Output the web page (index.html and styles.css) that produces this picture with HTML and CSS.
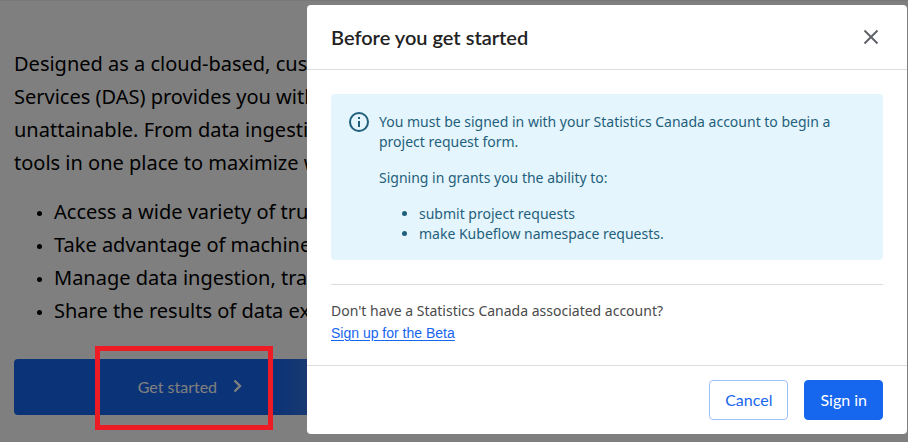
FILE: index.html
```html
<!DOCTYPE html>
<html lang="en">
<head>
<meta charset="utf-8">
<title>Before you get started</title>
<link rel="stylesheet" href="styles.css">
</head>
<body>
<main class="page">
  <p class="intro">Designed as a cloud-based, cus<br>Services (DAS) provides you with<br>unattainable. From data ingesti<br>tools in one place to maximize w</p>
  <ul class="features">
    <li>Access a wide variety of tru</li>
    <li>Take advantage of machine</li>
    <li>Manage data ingestion, tra</li>
    <li>Share the results of data ex</li>
  </ul>
  <div class="start">
    <button class="start-button" type="button">
      Get started
      <svg width="20" height="20" viewBox="0 0 20 20" fill="none" stroke="currentColor" stroke-width="2.4" aria-hidden="true"><path d="M7.5 4.5 13 10l-5.5 5.5"/></svg>
    </button>
    <span class="highlight"></span>
  </div>
</main>
<div class="backdrop">
  <section class="dialog" role="dialog" aria-labelledby="dialog-title">
    <header class="dialog-header">
      <h2 id="dialog-title">Before you get started</h2>
      <button class="close" type="button" aria-label="Close">
        <svg width="16" height="16" viewBox="0 0 16 16" fill="none" stroke="currentColor" stroke-width="2" aria-hidden="true"><path d="M1.5 1.5l13 13M14.5 1.5l-13 13"/></svg>
      </button>
    </header>
    <div class="dialog-body">
      <div class="alert">
        <svg class="alert-icon" width="20" height="20" viewBox="0 0 20 20" aria-hidden="true"><circle cx="10" cy="10" r="9" fill="none" stroke="currentColor" stroke-width="2"/><path d="M9 5h2v2H9zM9 9h2v6H9z" fill="currentColor"/></svg>
        <div class="alert-text">
          <p>You must be signed in with your Statistics Canada account to begin a project request form.</p>
          <p>Signing in grants you the ability to:</p>
          <ul>
            <li>submit project requests</li>
            <li>make Kubeflow namespace requests.</li>
          </ul>
        </div>
      </div>
      <div class="signup">
        <p>Don't have a Statistics Canada associated account?</p>
        <a href="#">Sign up for the Beta</a>
      </div>
    </div>
    <footer class="dialog-footer">
      <button class="button outline" type="button">Cancel</button>
      <button class="button primary" type="button">Sign in</button>
    </footer>
  </section>
</div>
</body>
</html>
```
FILE: styles.css
```css
* { box-sizing: border-box; }

body {
  margin: 0;
  min-height: 100vh;
  overflow: hidden;
  position: relative;
  background: #fff;
  color: #000;
  font-family: "Noto Sans", sans-serif;
}

h2, p, ul { margin: 0; }

button { cursor: pointer; }

.page {
  padding: 46px 14px 0;
  border-top: 1px solid #f0f0f0;
  font-size: 20px;
  line-height: 33px;
  white-space: nowrap;
}

.features {
  margin-top: 16px;
  padding-left: 40px;
}

.features li::marker { font-size: 14px; }

.start {
  position: relative;
  width: 41%;
  margin-top: 32px;
}

.start-button {
  display: flex;
  align-items: center;
  justify-content: center;
  gap: 10px;
  width: 100%;
  height: 56px;
  padding: 0 4px 2px 0;
  border: 0;
  border-radius: 4px;
  background: linear-gradient(90deg, #1766ee 72%, #3c78dc 85%);
  color: #fff;
  font: 16px Lato, sans-serif;
}

.highlight {
  position: absolute;
  z-index: 2;
  top: -13px;
  left: 81px;
  width: 178px;
  height: 84px;
  border: 5px solid #ed1c24;
}

.backdrop {
  position: absolute;
  z-index: 1;
  inset: 0;
  display: flex;
  align-items: flex-start;
  justify-content: flex-end;
  padding: 5px 1px 0;
  background: rgba(0, 0, 0, 0.5);
}

.dialog {
  width: 100%;
  max-width: 600px;
  border-radius: 4px;
  background: #fff;
  color: #4a4a4a;
  font-size: 14px;
  line-height: 20px;
}

.dialog-header {
  display: flex;
  align-items: center;
  justify-content: space-between;
  height: 65px;
  padding: 0 24px;
  border-bottom: 1px solid #dedede;
}

.dialog-header h2 {
  color: #222;
  font: 600 20px Lato, sans-serif;
}

.close {
  display: flex;
  padding: 4px;
  border: 0;
  background: none;
  color: #5f6368;
}

.dialog-body { padding: 24px 24px 22px; }

.alert {
  display: flex;
  gap: 10px;
  padding: 18px 18px 16px;
  border-radius: 4px;
  background: #e4f5fd;
  color: #1f5f7c;
}

.alert-icon { flex: none; }

.alert-text p { margin-bottom: 16px; }

.alert-text ul { padding-left: 40px; }

.signup {
  margin-top: 24px;
  padding-top: 16px;
  border-top: 1px solid #dedede;
}

.signup a {
  display: inline-block;
  margin-top: 2px;
  color: #1766ee;
  font-family: "Liberation Sans", sans-serif;
  text-underline-offset: 2px;
}

.dialog-footer {
  display: flex;
  justify-content: flex-end;
  gap: 16px;
  padding: 14px 24px;
  border-top: 1px solid #dedede;
}

.button {
  height: 40px;
  padding: 0 15px 2px;
  border: 1px solid #1766ee;
  border-radius: 4px;
  font: 16px Lato, sans-serif;
}

.outline {
  border-color: #a0c0fa;
  background: #fff;
  color: #1766ee;
}

.primary {
  background: #1766ee;
  color: #fff;
}
```
